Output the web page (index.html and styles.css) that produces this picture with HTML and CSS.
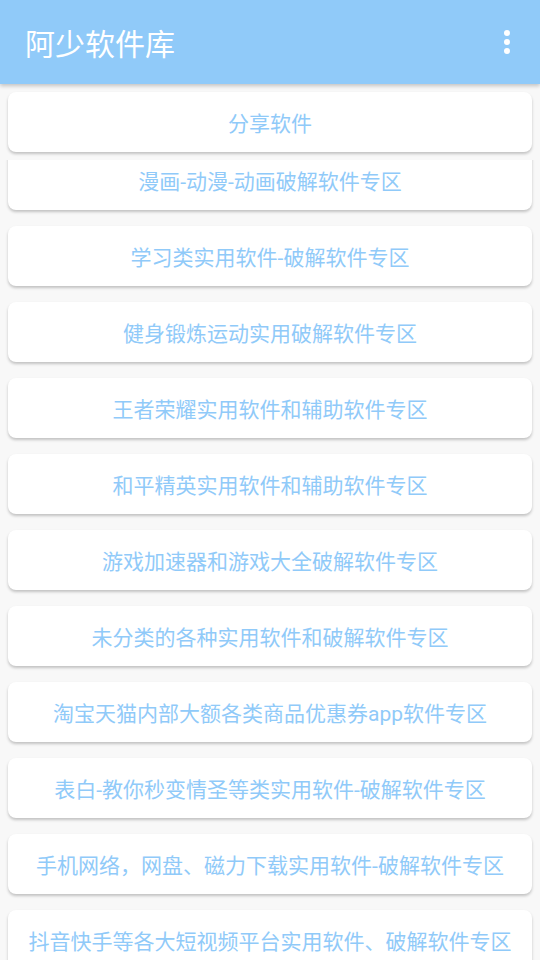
FILE: index.html
```html
<!DOCTYPE html>
<html lang="zh-CN">
<head>
    <meta charset="UTF-8">
    <meta name="viewport" content="width=device-width, initial-scale=1.0">
    <title>阿少软件库</title>
    <link rel="stylesheet" href="styles.css">
</head>
<body>
    <header class="appbar">
        <h1 class="title">阿少软件库</h1>
        <svg class="menu" width="24" height="24" viewBox="0 0 24 24">
            <circle cx="12" cy="3" r="3" fill="#fff"/>
            <circle cx="12" cy="12" r="3" fill="#fff"/>
            <circle cx="12" cy="21" r="3" fill="#fff"/>
        </svg>
    </header>

    <main class="content">
        <div class="card share">分享软件</div>

        <div class="list">
            <div class="list-inner">
                <div class="card">漫画-动漫-动画破解软件专区</div>
                <div class="card">学习类实用软件-破解软件专区</div>
                <div class="card">健身锻炼运动实用破解软件专区</div>
                <div class="card">王者荣耀实用软件和辅助软件专区</div>
                <div class="card">和平精英实用软件和辅助软件专区</div>
                <div class="card">游戏加速器和游戏大全破解软件专区</div>
                <div class="card">未分类的各种实用软件和破解软件专区</div>
                <div class="card">淘宝天猫内部大额各类商品优惠券app软件专区</div>
                <div class="card">表白-教你秒变情圣等类实用软件-破解软件专区</div>
                <div class="card">手机网络，网盘、磁力下载实用软件-破解软件专区</div>
                <div class="card">抖音快手等各大短视频平台实用软件、破解软件专区</div>
            </div>
        </div>
    </main>
</body>
</html>
```

FILE: styles.css
```css
* {
    margin: 0;
    padding: 0;
    box-sizing: border-box;
}
body {
    font-family: Roboto, "Noto Sans CJK SC", sans-serif;
    background-color: #f8f8f8;
    height: 960px;
    overflow: hidden;
}
.appbar {
    position: relative;
    z-index: 2;
    height: 84px;
    display: flex;
    align-items: center;
    justify-content: space-between;
    padding: 0 21px 0 25px;
    background-color: #90caf9;
    box-shadow: 0 2px 4px rgba(0, 0, 0, 0.22);
}
.title {
    font-size: 30px;
    font-weight: normal;
    color: #fff;
}
.content {
    padding: 8px 8px 0;
}
.card {
    height: 60px;
    display: flex;
    align-items: center;
    justify-content: center;
    background-color: #fff;
    border-radius: 8px;
    box-shadow: 0 2px 3px rgba(0, 0, 0, 0.22);
    color: #90caf9;
    font-size: 21px;
    white-space: nowrap;
}
.share {
    margin-bottom: 8px;
}
.list {
    height: 800px;
    overflow: hidden;
    margin: 0 -8px;
    padding: 0 8px;
}
.list-inner {
    margin-top: -10px;
}
.list-inner .card {
    margin-bottom: 16px;
}
```
